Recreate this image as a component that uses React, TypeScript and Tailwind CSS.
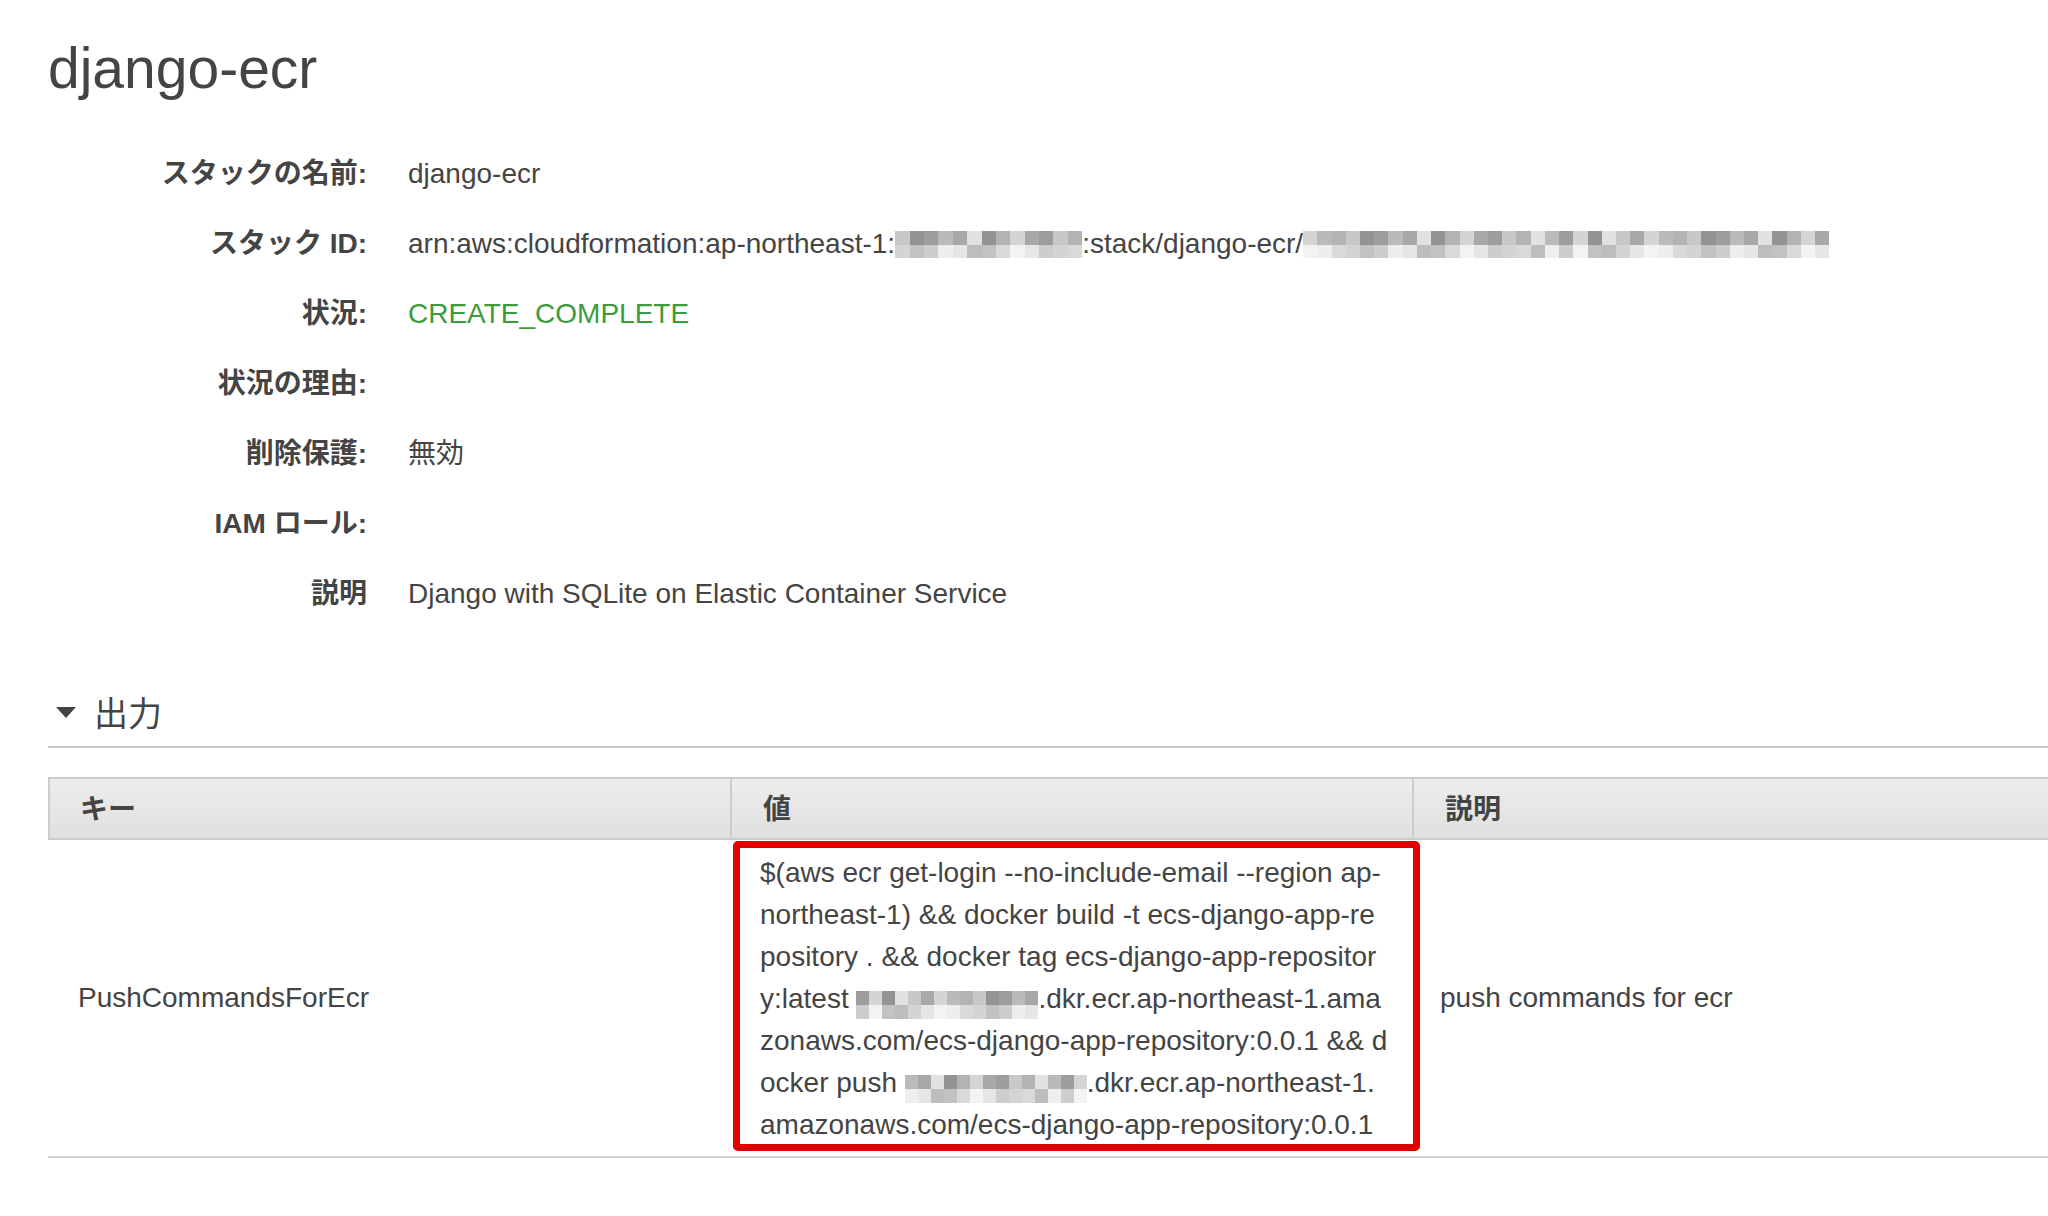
import React from "react";

const topShades = [
  "bg-[#a8a8a8]",
  "bg-[#939393]",
  "bg-[#bababa]",
  "bg-[#c8c8c8]",
  "bg-[#d4d4d4]",
  "bg-[#e2e2e2]",
  "bg-[#9d9d9d]",
  "bg-[#b3b3b3]",
];
const bottomShades = [
  "bg-[#cdcdcd]",
  "bg-[#d9d9d9]",
  "bg-[#e6e6e6]",
  "bg-[#c2c2c2]",
  "bg-[#eeeeee]",
  "bg-[#d4d4d4]",
  "bg-[#f3f3f3]",
  "bg-[#bdbdbd]",
];

// pixelated block standing in for a masked account id
const Blur: React.FC<{ cells: number; seed: number; className: string }> = ({
  cells,
  seed,
  className,
}) => (
  <div className={`flex shrink-0 flex-col ${className}`}>
    {[topShades, bottomShades].map((shades, r) => (
      <div key={r} className="flex flex-1">
        {Array.from({ length: cells }).map((_, i) => (
          <div
            key={i}
            className={`flex-1 ${shades[(i * 5 + seed * 3 + r * 2 + ((i * i) % 3)) % 8]}`}
          />
        ))}
      </div>
    ))}
  </div>
);

const rows: { label: string; value: React.ReactNode }[] = [
  { label: "スタックの名前:", value: "django-ecr" },
  {
    label: "スタック ID:",
    value: (
      <>
        <span>arn:aws:cloudformation:ap-northeast-1:</span>
        <Blur cells={13} seed={1} className="mt-[22px] h-[27px] w-[187px]" />
        <span>:stack/django-ecr/</span>
        <Blur cells={37} seed={4} className="mt-[22px] h-[27px] w-[526px]" />
      </>
    ),
  },
  {
    label: "状況:",
    value: <span className="text-[#3c9b3c]">CREATE_COMPLETE</span>,
  },
  { label: "状況の理由:", value: "" },
  { label: "削除保護:", value: "無効" },
  { label: "IAM ロール:", value: "" },
  { label: "説明", value: "Django with SQLite on Elastic Container Service" },
];

const App: React.FC = () => {
  return (
    <div className="w-full min-h-screen overflow-hidden bg-white text-[#444444] font-[family-name:'Liberation_Sans','Noto_Sans_CJK_JP',sans-serif]">
      <div className="pl-[48px] pt-[40px]">
        <h1 className="text-[57px] leading-[57px] font-normal">django-ecr</h1>

        <div className="mt-[42px]">
          {rows.map((row) => (
            <div key={row.label} className="flex h-[70px] text-[28px] leading-[70px]">
              <div className="w-[319px] shrink-0 text-right font-bold">{row.label}</div>
              <div className="ml-[41px] flex h-[70px] items-start whitespace-nowrap">
                {row.value}
              </div>
            </div>
          ))}
        </div>

        <div className="mt-[60px] border-b-2 border-[#cccccc] pb-[7px]">
          <div className="flex h-[50px] items-center gap-[18px] pl-[8px]">
            <svg width="20" height="11" viewBox="0 0 20 11" className="mb-[3px]">
              <path d="M0 0 L20 0 L10 11 Z" fill="#444444" />
            </svg>
            <span className="text-[34px] leading-[50px]">出力</span>
          </div>
        </div>

        <div className="mt-[29px] grid w-[2046px] grid-cols-[682px_682px_682px]">
          <div className="h-[63px] border-y-2 border-l-2 border-[#cccccc] bg-linear-to-b from-[#ededed] to-[#e0e0e0] pl-[30px] pt-[2px] text-[28px] font-bold leading-[57px]">
            キー
          </div>
          <div className="h-[63px] border-y-2 border-l-2 border-[#cccccc] bg-linear-to-b from-[#ededed] to-[#e0e0e0] pl-[31px] pt-[2px] text-[28px] font-bold leading-[57px]">
            値
          </div>
          <div className="h-[63px] border-y-2 border-l-2 border-[#cccccc] bg-linear-to-b from-[#ededed] to-[#e0e0e0] pl-[31px] pt-[2px] text-[28px] font-bold leading-[57px]">
            説明
          </div>

          <div className="flex h-[318px] items-center border-b-2 border-[#d0d0d0] pl-[30px] text-[28px]">
            PushCommandsForEcr
          </div>
          <div className="h-[318px] border-b-2 border-[#d0d0d0]">
            <div className="ml-[3px] mt-[1px] h-[310px] w-[687px] rounded-[5px] border-[7px] border-[#e00000] pl-[20px] pt-[4px] text-[28px] leading-[42px] whitespace-nowrap">
              <div className="h-[42px]">$(aws ecr get-login --no-include-email --region ap-</div>
              <div className="h-[42px]">northeast-1) &amp;&amp; docker build -t ecs-django-app-re</div>
              <div className="h-[42px]">pository . &amp;&amp; docker tag ecs-django-app-repositor</div>
              <div className="flex h-[42px] items-start">
                <span className="whitespace-pre">y:latest </span>
                <Blur cells={14} seed={2} className="mt-[13px] h-[28px] w-[182px]" />
                <span>.dkr.ecr.ap-northeast-1.ama</span>
              </div>
              <div className="h-[42px]">zonaws.com/ecs-django-app-repository:0.0.1 &amp;&amp; d</div>
              <div className="flex h-[42px] items-start">
                <span className="whitespace-pre">ocker push </span>
                <Blur cells={14} seed={6} className="mt-[13px] h-[28px] w-[182px]" />
                <span>.dkr.ecr.ap-northeast-1.</span>
              </div>
              <div className="h-[42px]">amazonaws.com/ecs-django-app-repository:0.0.1</div>
            </div>
          </div>
          <div className="flex h-[318px] items-center border-b-2 border-[#d0d0d0] pl-[28px] text-[28px]">
            push commands for ecr
          </div>
        </div>
      </div>
    </div>
  );
};

export default App;
